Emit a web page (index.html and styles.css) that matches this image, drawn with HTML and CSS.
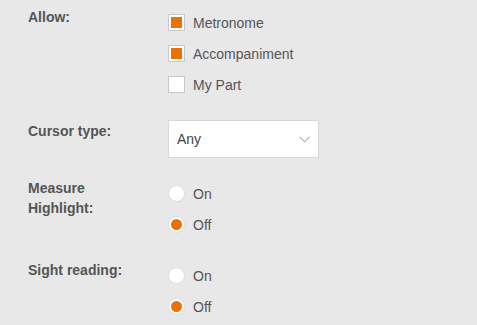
FILE: index.html
```html
<!DOCTYPE html>
<html lang="en">
  <head>
    <meta charset="UTF-8" />
    <meta name="viewport" content="width=device-width, initial-scale=1.0" />
    <title>Settings</title>
    <link rel="stylesheet" href="styles.css">
  </head>
  <body>
    <div class="settings">
      <div class="row">
        <div class="label">Allow:</div>
        <div class="options">
          <div class="option">
            <span class="check checked"></span>
            <span>Metronome</span>
          </div>
          <div class="option">
            <span class="check checked"></span>
            <span>Accompaniment</span>
          </div>
          <div class="option">
            <span class="check"></span>
            <span>My Part</span>
          </div>
        </div>
      </div>

      <div class="row">
        <div class="label label-select">Cursor type:</div>
        <div class="select">
          <span>Any</span>
          <svg width="11" height="7" viewBox="0 0 11 7">
            <path d="M0.5 0.8 L5.5 5.8 L10.5 0.8" fill="none" stroke="#8a8a8a" stroke-width="1" />
          </svg>
        </div>
      </div>

      <div class="row">
        <div class="label">Measure<br />Highlight:</div>
        <div class="options">
          <div class="option">
            <span class="radio"></span>
            <span>On</span>
          </div>
          <div class="option">
            <span class="radio checked"></span>
            <span>Off</span>
          </div>
        </div>
      </div>

      <div class="row">
        <div class="label">Sight reading:</div>
        <div class="options">
          <div class="option">
            <span class="radio"></span>
            <span>On</span>
          </div>
          <div class="option">
            <span class="radio checked"></span>
            <span>Off</span>
          </div>
        </div>
      </div>
    </div>
  </body>
</html>
```

FILE: styles.css
```css
body {
  font-family: "Liberation Sans", Arial, sans-serif;
  margin: 0;
  padding: 0;
  background-color: #e8e8e8;
  color: #555;
}

.settings {
  display: flex;
  flex-direction: column;
  gap: 20px;
  padding: 7px 0 0 28px;
}

.row {
  display: grid;
  grid-template-columns: 140px 151px;
}

.label {
  font-size: 14px;
  font-weight: bold;
  line-height: 20px;
  color: #555;
}

.label-select {
  padding-top: 1px;
}

.options {
  display: flex;
  flex-direction: column;
}

.option {
  display: flex;
  align-items: center;
  gap: 8px;
  height: 31px;
  font-size: 14px;
  color: #555;
  white-space: nowrap;
}

.check {
  box-sizing: border-box;
  width: 17px;
  height: 17px;
  flex: none;
  background-color: #fff;
  border: 1px solid #c8c8c8;
  display: flex;
  align-items: center;
  justify-content: center;
}

.check.checked::after {
  content: "";
  width: 11px;
  height: 11px;
  background-color: #eb7100;
}

.radio {
  box-sizing: border-box;
  width: 17px;
  height: 17px;
  flex: none;
  border-radius: 50%;
  background-color: #fff;
  border: 1px solid #dcdcdc;
  display: flex;
  align-items: center;
  justify-content: center;
}

.radio.checked::after {
  content: "";
  width: 11px;
  height: 11px;
  border-radius: 50%;
  background-color: #eb7100;
}

.select {
  box-sizing: border-box;
  height: 38px;
  display: flex;
  align-items: center;
  justify-content: space-between;
  padding: 0 8px 0 8px;
  background-color: #fff;
  border: 1px solid #d8d8d8;
  font-size: 14px;
  color: #444;
}
```
